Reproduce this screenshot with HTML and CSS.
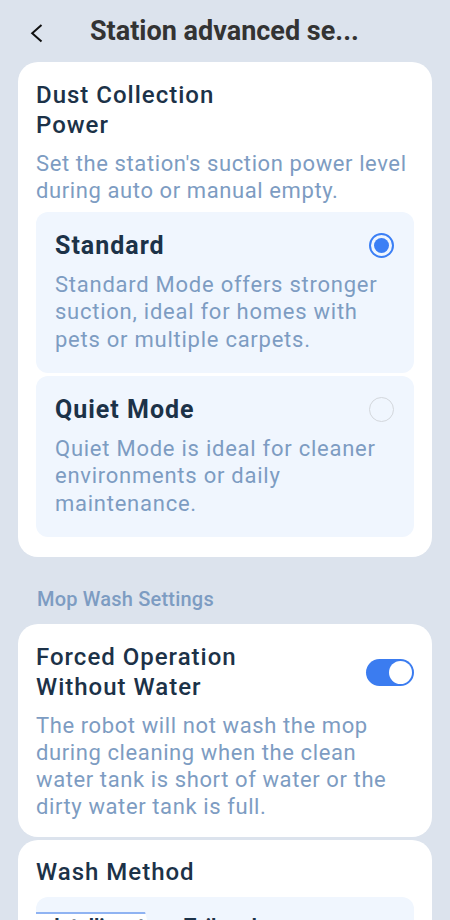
FILE: index.html
```html
<!DOCTYPE html>
<html lang="en">
<head>
  <meta charset="UTF-8">
  <meta name="viewport" content="width=device-width, initial-scale=1.0">
  <title>Station advanced settings</title>
  <link rel="stylesheet" href="styles.css">
</head>
<body>
  <div class="page">
    <header class="topbar">
      <svg class="back" viewBox="0 0 24 24" width="24" height="24">
        <path d="M16.5 6 L7.2 14.3 L16.5 22.6" fill="none" stroke="#111" stroke-width="2"/>
      </svg>
      <h1>Station advanced se...</h1>
    </header>

    <div class="content">
      <section class="card">
        <h2 class="card-title">Dust Collection Power</h2>
        <p class="card-desc">Set the station's suction power level during auto or manual empty.</p>
        <div class="options">
          <div class="option">
            <div class="option-head">
              <span class="option-name">Standard</span>
              <span class="radio checked"></span>
            </div>
            <p class="card-desc">Standard Mode offers stronger suction, ideal for homes with pets or multiple carpets.</p>
          </div>
          <div class="option">
            <div class="option-head">
              <span class="option-name">Quiet Mode</span>
              <span class="radio"></span>
            </div>
            <p class="card-desc">Quiet Mode is ideal for cleaner environments or daily maintenance.</p>
          </div>
        </div>
      </section>

      <div class="section-label">Mop Wash Settings</div>

      <section class="card card-tight">
        <div class="row">
          <h2 class="card-title">Forced Operation Without Water</h2>
          <span class="toggle on"><span class="knob"></span></span>
        </div>
        <p class="card-desc">The robot will not wash the mop during cleaning when the clean water tank is short of water or the dirty water tank is full.</p>
      </section>

      <section class="card card-tight next">
        <h2 class="card-title">Wash Method</h2>
        <div class="tab-box">
          <div class="tabs">
            <span class="tab active">Intelligent</span>
            <span class="tab">Tailored</span>
          </div>
        </div>
      </section>
    </div>
  </div>
</body>
</html>
```

FILE: styles.css
```css
body {
  margin: 0;
  background-color: #dce3ed;
  font-family: Roboto, "Liberation Sans", sans-serif;
}

.page {
  height: 920px;
  overflow: hidden;
}

.topbar {
  height: 62px;
  display: flex;
  align-items: center;
}

.back {
  margin-left: 25px;
  flex-shrink: 0;
}

.topbar h1 {
  margin: 0 0 0 41px;
  font-size: 27px;
  font-weight: 700;
  line-height: 30px;
  color: #333;
  white-space: nowrap;
}

.content {
  padding: 0 18px;
}

.card {
  background-color: #fff;
  border-radius: 20px;
  padding: 18px 18px 20px;
}

.card-tight {
  padding-bottom: 17px;
}

.card.next {
  margin-top: 3px;
  padding-top: 17px;
}

.card-title {
  margin: 0;
  max-width: 240px;
  font-size: 24px;
  font-weight: 500;
  line-height: 30px;
  letter-spacing: 1px;
  color: #1c3248;
}

.card-desc {
  margin: 10px 0 0;
  font-size: 22px;
  line-height: 27px;
  letter-spacing: 0.6px;
  color: #7d9cc2;
}

.options {
  margin-top: 8px;
  display: flex;
  flex-direction: column;
  gap: 3px;
}

.option {
  background-color: #f0f6fe;
  border-radius: 12px;
  padding: 18.5px 20px 20px 19px;
}

.option .card-desc {
  line-height: 27.5px;
  letter-spacing: 0.75px;
}

.option-head {
  display: flex;
  justify-content: space-between;
  align-items: center;
}

.option-name {
  font-size: 25px;
  font-weight: 700;
  line-height: 30px;
  letter-spacing: 1px;
  color: #1c3248;
}

.radio {
  width: 25px;
  height: 25px;
  box-sizing: border-box;
  border-radius: 50%;
  border: 1.5px solid #d3d7dc;
  position: relative;
}

.radio.checked {
  border: 2px solid #3b7ff5;
}

.radio.checked::after {
  content: "";
  position: absolute;
  left: 3px;
  top: 3px;
  width: 15px;
  height: 15px;
  border-radius: 50%;
  background-color: #3b7ff5;
}

.section-label {
  margin: 30px 0 13px 19px;
  font-size: 20px;
  font-weight: 500;
  line-height: 24px;
  letter-spacing: 0.2px;
  color: #7d9cc2;
}

.row {
  display: flex;
  justify-content: space-between;
  align-items: center;
}

.toggle {
  width: 48px;
  height: 27px;
  border-radius: 14px;
  background-color: #3b7cf0;
  display: flex;
  align-items: center;
  justify-content: flex-end;
  padding: 0 2px;
  box-sizing: border-box;
}

.knob {
  width: 23px;
  height: 23px;
  border-radius: 50%;
  background-color: #fff;
}

.tab-box {
  margin-top: 10px;
  background-color: #f0f6fe;
  border-radius: 12px;
  padding-top: 15px;
  height: 80px;
}

.tabs {
  display: flex;
  align-items: flex-start;
}

.tab {
  font-size: 20px;
  font-weight: 700;
  line-height: 24px;
  color: #1c3248;
  padding: 0 0 10px 18px;
  white-space: nowrap;
}

.tab.active {
  width: 100px;
  background: linear-gradient(#ffffff, #f7faff);
  border-top: 2px solid #8fb3f2;
  clip-path: polygon(0 -2px, 92% -2px, 100% 100%, 0 100%);
}

.tab + .tab {
  padding-left: 30px;
  padding-top: 2px;
}
```
